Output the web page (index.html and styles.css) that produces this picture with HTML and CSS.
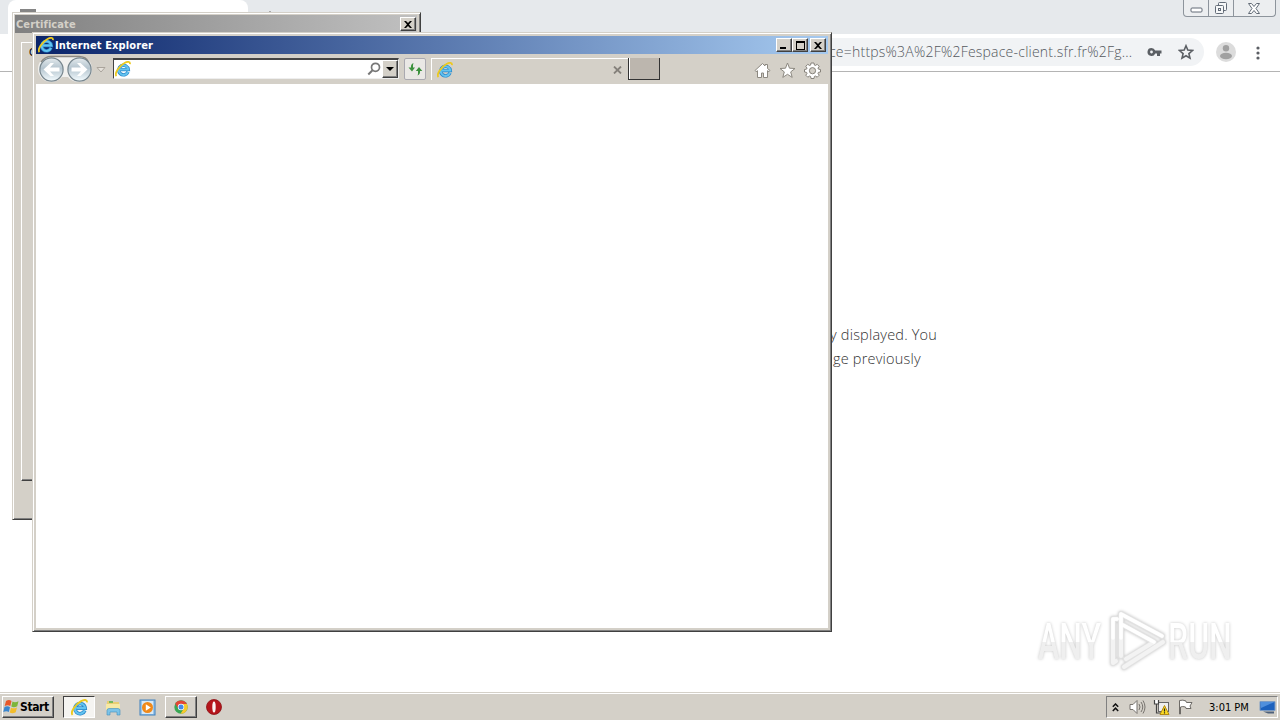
FILE: index.html
```html
<!DOCTYPE html>
<html lang="en">
<head>
<meta charset="utf-8">
<title>Desktop</title>
<link rel="stylesheet" href="styles.css">
</head>
<body>
<svg width="0" height="0" class="defs" aria-hidden="true">
  <defs>
    <linearGradient id="orb" x1="0" y1="0" x2="0" y2="1"><stop offset="0" stop-color="#e4eaed"/><stop offset=".45" stop-color="#b4c4ce"/><stop offset="1" stop-color="#f4fcff"/></linearGradient>
    <symbol id="ie" viewBox="0 0 16 16">
      <path d="M13 10.800A4.800 4.800 0 1 1 13.300 8.600H5" fill="none" stroke="#2a86c8" stroke-width="3.400"/>
      <path d="M13 10.800A4.800 4.800 0 1 1 13.300 8.600H5" fill="none" stroke="#62c3f0" stroke-width="2"/>
      <path d="M1.500 15C-1 12.500 4 5 9.500 2 12.500.4 15.300.3 15 3.200" fill="none" stroke="#ecc91f" stroke-width="1.800"/>
    </symbol>
  </defs>
</svg>
<div class="desktop">
  <main class="browser">
    <div class="tabstrip">
      <div class="tab"><span class="favicon"></span></div>
      <span class="newtab"></span>
      <div class="caption-buttons">
        <span><svg width="13" height="6"><rect x="1" y="1" width="11" height="4" rx="1" fill="#fff" stroke="#626b77"/></svg></span>
        <span><svg width="14" height="14" fill="#f6f7f8" stroke="#626b77"><rect x="4.500" y="1.500" width="8" height="8" rx="1"/><rect x="1.500" y="4.500" width="8" height="8" rx="1"/><rect x="4.500" y="7.500" width="2" height="2"/></svg></span>
        <span><svg width="12" height="11"><path d="M.5.5h3L6 3.500 8.500.5h3L8 5.500l3.500 5h-3L6 7.500l-2.500 3h-3l3.500-5z" fill="#fff" stroke="#626b77"/></svg></span>
      </div>
    </div>
    <div class="toolbar">
      <div class="omnibox">
        <span class="url">ce=https%3A%2F%2Fespace-client.sfr.fr%2Fg...</span>
        <svg class="key" width="15" height="10"><path d="M4.500 1a4 4 0 1 0 3.700 5.500H10V9h3V6.500h1.500v-3H8.200A4 4 0 0 0 4.500 1zm0 2.600a1.400 1.400 0 1 1 0 2.800 1.400 1.400 0 0 1 0-2.800z" fill="#5b5f64" fill-rule="evenodd"/></svg>
        <svg class="bookmark" width="16" height="16"><path d="M8 1.800l1.800 4.300 4.700.4-3.600 3.100L12 14.200 8 11.800l-4 2.400 1.100-4.600L1.500 6.500l4.700-.4z" fill="none" stroke="#5b5f64" stroke-width="1.600"/></svg>
      </div>
      <svg class="avatar" width="20" height="20"><circle cx="10" cy="10" r="10" fill="#dcdcdc"/><circle cx="10" cy="6.300" r="3.200" fill="#a0a0a0"/><ellipse cx="10" cy="14" rx="6" ry="3.300" fill="#a0a0a0"/></svg>
      <svg class="menu" width="4" height="14" fill="#5b5f64"><circle cx="2" cy="2" r="1.600"/><circle cx="2" cy="7" r="1.600"/><circle cx="2" cy="12" r="1.600"/></svg>
    </div>
    <div class="page">
      <p class="l1">y displayed. You</p>
      <p class="l2">ge previously</p>
    </div>
  </main>

  <div class="watermark">
    <span class="any">ANY</span>
    <svg width="62" height="66" viewBox="0 0 62 66" fill="none" stroke-linejoin="round" stroke-linecap="round">
      <path d="M11 11H7v44l3-2M15 48V6l41 22M17 17l31 17-28 17M57 34L18 59" stroke="#e2e2e2" stroke-width="6"/>
      <path d="M15 48V6l41 22M11 11H7v44l3-2M17 17l31 17-28 17M57 34L18 59" stroke="#f3f3f3" stroke-width="4"/>
      <path d="M15 30V6l41 22M7 30V11h4M17 17l31 17" stroke="#fff" stroke-width="3.500"/>
    </svg>
    <span class="run">RUN</span>
  </div>

  <section class="window certificate">
    <header class="titlebar"><span class="title">Certificate</span>
      <span class="wbtn"><svg width="8" height="7"><path d="M0 0h2l2 2 2-2h2L5 3.500 8 7H6L4 5 2 7H0l3-3.500z"/></svg></span>
    </header>
    <div class="sheet"><span>G</span></div>
  </section>

  <section class="window explorer">
    <header class="titlebar">
      <svg class="logo" width="16" height="16"><use href="#ie"/></svg>
      <span class="title">Internet Explorer</span>
      <span class="wbtn"><svg class="min" width="8" height="7"><path d="M0 5h6v2H0z"/></svg></span>
      <span class="wbtn"><svg width="9" height="9"><path d="M0 0h9v9H0zM1 2v6h7V2z" fill-rule="evenodd"/></svg></span>
      <span class="wbtn last"><svg width="8" height="7"><path d="M0 0h2l2 2 2-2h2L5 3.500 8 7H6L4 5 2 7H0l3-3.500z"/></svg></span>
    </header>
    <div class="navbar">
      <svg class="orbs" width="56" height="28">
        <path d="M14 1h28a13 13 0 0 1 0 26q-7 0-11-5h-6q-4 5-11 5A13 13 0 0 1 14 1z" fill="#f1f1ef"/>
        <path d="M4 7Q8 1.500 14 1.500h28q7 0 10 6" fill="none" stroke="#8d8982" stroke-width="1.500"/>
        <circle cx="14.500" cy="14.500" r="11.600" fill="url(#orb)" stroke="#77868e" stroke-width="1.200"/>
        <circle cx="42.500" cy="14.500" r="11.600" fill="url(#orb)" stroke="#77868e" stroke-width="1.200"/>
        <path d="M6.500 14.500l7-6.500H17l-4 4.500h9.500v4H13l4 4.500h-3.500z" fill="#fff"/>
        <path d="M50.500 14.500l-7-6.500H40l4 4.500h-9.500v4H44L40 21h3.500z" fill="#fff"/>
      </svg>
      <svg class="recent" width="10" height="6"><path d="M1 .5h8L5 5z" fill="#e6e2dc" stroke="#aaa49c"/></svg>
      <div class="address">
        <svg width="16" height="16"><use href="#ie"/></svg>
        <svg class="search" width="14" height="14"><circle cx="8.500" cy="5.300" r="4" fill="none" stroke="#777" stroke-width="1.700"/><path d="M5.500 8.300L1.300 12.500" stroke="#777" stroke-width="2"/></svg>
        <span class="drop"><svg width="8" height="4"><path d="M0 0h8L4 4z"/></svg></span>
      </div>
      <span class="refresh"><svg width="15" height="13" fill="#3c913d"><path d="M5.500 0Q2.500 1 3 4.500H.5l3.500 4 3-4H5Q4.700 2 5.500 0z"/><path d="M9.500 12.500Q12.500 11 12 8h2.300L11 4 7.800 8H10q.3 3-.5 4.500z"/></svg></span>
      <div class="ietab">
        <svg width="16" height="16"><use href="#ie"/></svg>
        <svg class="close" width="9" height="8"><path d="M1 .5l7 7M8 .5l-7 7" stroke="#85817b" stroke-width="1.800"/></svg>
      </div>
      <span class="ienew"></span>
      <div class="tools">
        <svg width="17" height="17"><path d="M1 8.500L8.500 1.500 11 4V2.500h2.500v4L16 8.500l-1 1.200-1.500-1V15.500h-4v-4.500h-2v4.500h-4V8.700L2 9.700z" fill="#fff" stroke="#8c8880"/></svg>
        <svg width="17" height="17"><path d="M8.500 1l2 5.200 5.500.3-4.300 3.400 1.500 5.500-4.700-3.100-4.700 3.100 1.500-5.500L1 6.500l5.500-.3z" fill="#fff" stroke="#8c8880"/></svg>
        <svg width="17" height="17"><path d="M7 1h3l.4 2.100 1 .4 1.800-1.200 2 2L14 6.100l.4 1L16.500 7.500v2.500l-2.100.4-.4 1 1.200 1.800-2 2-1.800-1.200-1 .4L10 16.500H7l-.4-2.100-1-.4-1.800 1.200-2-2L3 11.400l-.4-1L.5 10V7.500l2.100-.4.4-1-1.200-1.800 2-2 1.800 1.200 1-.4zM8.500 5.600a3.100 3.100 0 1 0 0 6.200 3.100 3.100 0 0 0 0-6.200z" fill="#fff" stroke="#85817a" fill-rule="evenodd"/></svg>
      </div>
    </div>
    <div class="viewport"></div>
  </section>

  <footer class="taskbar">
    <div class="start">
      <svg width="17" height="16"><path d="M3 2Q6 0 8.500 2L7.300 7Q5 5.500 1.700 7z" fill="#e8582a"/><path d="M9.500 2.500Q12 4 15.500 2.200L14.200 7.200Q11 9 8.300 7.500z" fill="#7db53a"/><path d="M1.500 8Q4.500 6.600 7 8.200L5.800 13Q3.500 11.500.3 13z" fill="#3a86cf"/><path d="M8 8.700Q10.500 10 14 8.400L12.700 13.200Q9.500 15 6.800 13.500z" fill="#f3bd2b"/></svg>
      <span>Start</span>
    </div>
    <div class="task pressed"><svg width="17" height="17"><use href="#ie"/></svg></div>
    <div class="task"><svg width="17" height="17"><path d="M2 2h5l1 1h6v9H2z" fill="#e9ce73"/><path d="M4 2h4v2H4z" fill="#74b85c"/><path d="M1 5h14v6H1z" fill="#f7e9a4"/><path d="M2 16v-4.500q0-2 2-2h9q2 0 2 2V16h-3v-3H5v3z" fill="#7cc3e8" stroke="#408fbd" stroke-width=".6"/></svg></div>
    <div class="task"><svg width="17" height="17"><rect x="1" y="1" width="15" height="15" fill="#9ac6eb" stroke="#3f80bd"/><rect x="3" y="2" width="11" height="13" fill="#d9e9f5"/><circle cx="8.500" cy="8.500" r="5.500" fill="#f08919"/><path d="M6.800 5.300v6.400l5-3.200z" fill="#fff"/></svg></div>
    <div class="task raised"><svg width="14" height="14"><circle cx="7" cy="7" r="6.700" fill="#38a653"/><path d="M1.200 3.700A6.700 6.700 0 0 1 12.900 4H7L4.400 8.500z" fill="#e34535"/><path d="M12.900 4A6.700 6.700 0 0 1 6.500 13.700L9.800 8.500 9 4z" fill="#f7c92c"/><circle cx="7" cy="7" r="3.200" fill="#fff"/><circle cx="7" cy="7" r="2.500" fill="#4489e8"/></svg></div>
    <div class="task opera"><svg width="16" height="16"><circle cx="8" cy="8" r="7.500" fill="#b5151b" stroke="#8d1014" stroke-width=".8"/><ellipse cx="8" cy="8" rx="1.700" ry="5.500" fill="#fbf3f2"/></svg></div>
    <div class="tray">
      <svg class="chev" width="7" height="9"><path d="M.8 3.800L3.500 1 6.200 3.800M.8 8L3.500 5.200 6.200 8" fill="none" stroke="#111" stroke-width="1.500"/></svg>
      <svg class="sound" width="17" height="16" fill="none" stroke="#77736e"><path d="M1 5.500h3l4-4v13l-4-4H1z" fill="#fff"/><path d="M10 5q2 3 0 6M12 3q3.500 5 0 10M14 1.500q4 6.500 0 13"/></svg>
      <svg class="net" width="17" height="17"><rect x="5.500" y="3.500" width="10" height="9" fill="#eee" stroke="#666"/><path d="M1 1h5v4H1z" fill="#fff"/><path d="M1.500 1v4h4V1M3.500 5v9h5" fill="none" stroke="#444" stroke-width="1.200"/><path d="M11.500 6.500l4.500 9H7z" fill="#fbdb23" stroke="#b48a12"/><path d="M11.500 9.500v3M11.500 13.300v1.200" stroke="#222" stroke-width="1.200"/></svg>
      <svg class="flag" width="17" height="16"><path d="M2.500 1.500q3.500-1 6.500.5 0 1 .5 1.500h5.500l-2 3.500 1 2.500H9L8.500 8q-3-1-5 0v7h-1z" fill="#fff" stroke="#6e6b67"/></svg>
      <time>3:01 PM</time>
      <svg class="monitor" width="17" height="15"><path d="M1 1.500h15v9H1z" fill="#1d61bd" stroke="#7d9cc4"/><path d="M1.500 2h14L2 8z" fill="#508fdc"/><path d="M4 11.500h11v2H9z" fill="#4d607b"/></svg>
    </div>
  </footer>
</div>
</body>
</html>
```

FILE: styles.css
```css
* { box-sizing: border-box; }
body { margin: 0; font-family: "DejaVu Sans Condensed", "DejaVu Sans", sans-serif; font-size: 11px; }
svg { display: block; flex: none; }
.defs { position: absolute; }
.desktop { position: relative; width: 1280px; height: 720px; overflow: hidden; background: #fff; display: flex; flex-direction: column; }

/* Background browser */
.browser { flex: 1; display: flex; flex-direction: column; }
.tabstrip { height: 34px; background: #e6e9ec; display: flex; align-items: flex-start; padding-left: 8px; }
.tab { width: 240px; height: 34px; background: #fff; border-radius: 8px 8px 0 0; padding: 9px 12px; }
.favicon { display: block; width: 16px; height: 4px; background: #858585; }
.newtab { width: 2px; height: 2px; margin: 11px 0 0 21px; background: #aaa; }
.caption-buttons { margin-left: auto; margin-right: 4px; width: 93px; height: 17px; display: flex; border: 1px solid #8d949c; border-top: 0; border-radius: 0 0 4px 4px; background: #eceef0; }
.caption-buttons span { display: flex; align-items: center; justify-content: center; width: 25px; border-right: 1px solid #8d949c; }
.caption-buttons span:first-child { padding-top: 4px; }
.caption-buttons span:last-child { flex: 1; border: 0; padding-right: 2px; }
.toolbar { height: 38px; display: flex; align-items: center; border-bottom: 1px solid #b4b4b4; padding-left: 104px; }
.omnibox { width: 1100px; height: 28px; margin-top: -1px; background: #f1f3f5; border-radius: 14px; display: flex; align-items: center; padding-left: 725px; }
.url { width: 318px; font: 300 14px/20px "Open Sans", "Noto Sans", sans-serif; letter-spacing: .22px; color: #54585d; white-space: nowrap; }
.bookmark { margin-left: 16px; }
.avatar { margin-left: 12px; margin-top: -1px; }
.menu { margin-left: 20px; }
.page { padding: 251px 0 0 830px; font: 300 14.5px/24px "Open Sans", "Noto Sans", sans-serif; letter-spacing: .2px; color: #333; }
.page p { margin: 0; white-space: nowrap; }
.page .l2 { padding-left: 3px; }

/* Watermark over the page */
.watermark { position: absolute; left: 1038px; top: 608px; width: 200px; height: 66px; display: flex; align-items: center; filter: drop-shadow(0 0 1.5px #c6c6c6); }
.watermark svg { margin-left: -1px; }
.watermark span { flex: none; width: 110px; margin-right: -41px; padding-top: 2px; font: 500 50px/64px Roboto, sans-serif; transform-origin: 0 50%; background: linear-gradient(#fff 52%, #efefef 52%); -webkit-background-clip: text; background-clip: text; color: transparent; }
.watermark .any, .watermark .run { transform: scaleX(.64); }

/* Classic windows */
.window { position: absolute; background: #d4d0c8; border: 1px solid #d4d0c8; border-right-color: #404040; border-bottom-color: #404040; box-shadow: inset 1px 1px #fff, inset -1px -1px #808080; padding: 3px; display: flex; flex-direction: column; }
.titlebar { height: 18px; display: flex; align-items: center; flex: none; }
.title { margin-right: auto; font-weight: 700; white-space: nowrap; }
.wbtn { width: 16px; height: 14px; display: flex; align-items: center; justify-content: center; background: #d4d0c8; border: 1px solid; border-color: #fff #404040 #404040 #fff; box-shadow: inset -1px -1px #808080; }
.certificate { left: 12px; top: 12px; width: 409px; height: 508px; padding-left: 2px; padding-top: 2px; }
.certificate .titlebar { padding-right: 1px; color: #d4d0c8; background: linear-gradient(90deg, #808080, #c0c0c0); }
.certificate .title { padding-left: 1px; letter-spacing: .1px; }
.certificate .sheet { margin: 9px 4px 0 6px; height: 439px; padding: 3px 7px; border: 1px solid; border-color: #fff #404040 #404040 #fff; box-shadow: inset -1px -1px #808080; }
.explorer { left: 32px; top: 32px; width: 800px; height: 600px; }
.explorer .titlebar { padding: 0 2px; color: #fff; background: linear-gradient(90deg, #0a246a, #a6caf0); }
.explorer .title { padding-left: 1px; letter-spacing: .13px; }
.explorer .last { margin-left: 2px; }
.navbar { height: 30px; flex: none; display: flex; align-items: center; padding-left: 1px; }
.recent { margin-left: 3px; margin-top: 1px; }
.address { width: 286px; height: 21px; margin-left: 7px; background: #fff; border: 1px solid; border-color: #444 #eee #eee #444; border-top-width: 2px; display: flex; align-items: center; padding-left: 1px; margin-top: -1px; }
.search { margin-left: auto; margin-right: 1px; }
.drop { width: 16px; height: 18px; display: flex; align-items: center; justify-content: center; background: #d4d0c8; border: 1px solid; border-color: #fff #404040 #404040 #fff; box-shadow: inset -1px -1px #808080; }
.refresh { width: 22px; height: 22px; margin-left: 5px; display: flex; align-items: center; justify-content: center; background: #eae8e5; border: 1px solid #aaa9b0; border-radius: 2px; }
.ietab { width: 197px; height: 22px; margin-left: 5px; display: flex; align-items: center; padding-left: 5px; border: 1px solid #fff; border-width: 1px 0 0 1px; }
.close { margin-left: auto; margin-right: 6px; }
.ienew { width: 32px; height: 22px; background: #bcb6ae; border: 1px solid #333; border-top: 0; box-shadow: inset 1px 0 #fff; }
.tools { margin-left: auto; margin-right: 7px; margin-top: 3px; display: flex; gap: 8px; }
.viewport { flex: 1; background: #fff; margin: 0; }

/* Taskbar */
.taskbar { height: 28px; background: #d4d0c8; border-top: 1px solid #d4d0c8; box-shadow: inset 0 1px #fff; display: flex; padding: 3px 2px 2px; }
.start, .raised { border: 1px solid; border-color: #fff #404040 #404040 #fff; box-shadow: inset -1px -1px #808080; }
.start { width: 52px; height: 22px; display: flex; align-items: center; padding-left: 0; font-size: 12px; font-weight: 700; letter-spacing: -.4px; margin-right: 9px; }
.task { width: 32px; height: 22px; margin-right: 2px; display: flex; align-items: center; justify-content: center; }
.pressed { background: #f5f4f1; border: 1px solid; border-color: #404040 #fff #fff #404040; }
.tray { width: 172px; height: 22px; margin-left: auto; display: flex; align-items: center; border: 1px solid; border-color: #808080 #fff #fff #808080; padding-left: 5px; }
.sound { margin-left: 10px; }
.net, .flag { margin-left: 7px; }
.tray time { margin-left: 15px; width: 50px; white-space: nowrap; }
.opera { margin-left: -1px; }
```
